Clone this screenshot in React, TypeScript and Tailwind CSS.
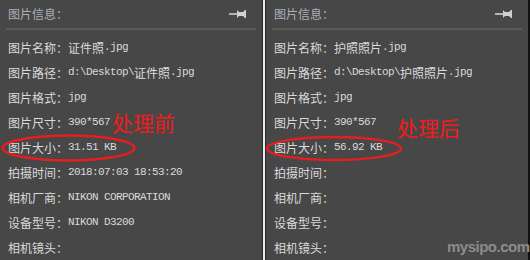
import React from 'react'

const cjk = '"Noto Sans CJK SC", "Liberation Sans", sans-serif'
const mono = '"Liberation Mono", "Noto Sans CJK SC", monospace'

interface Row {
  label: string
  value?: string
}

function PinIcon(): React.JSX.Element {
  return (
    <svg width="18" height="10" viewBox="0 0 18 10" className="text-[#d0d0d0]">
      <path d="M0 5 H8" stroke="currentColor" strokeWidth="1.6" />
      <path d="M8 1 L10 3 H14 L16 1 H17 V9 H16 L14 7 H10 L8 9 Z" fill="currentColor" />
    </svg>
  )
}

function Value({ text }: { text: string }): React.JSX.Element {
  // split ascii runs (monospace) from CJK runs
  const parts = text.match(/[\x00-\x7f]+|[^\x00-\x7f]+/g) ?? []
  return (
    <>
      {parts.map((p, i) =>
        /^[\x00-\x7f]+$/.test(p) ? (
          <span key={i} className="text-[11px] tracking-[-0.6px] whitespace-pre" style={{ fontFamily: mono }}>
            {p}
          </span>
        ) : (
          <span key={i} className="text-[12px]" style={{ fontFamily: cjk }}>
            {p}
          </span>
        )
      )}
    </>
  )
}

function Panel({ rows }: { rows: Row[] }): React.JSX.Element {
  return (
    <div className="w-[262px] h-full bg-[#474747] px-[6px] flex flex-col">
      <div className="h-[32px] flex items-center justify-between border-b-2 border-[#5a5a5a] pl-[2px] pr-[9px]">
        <span className="text-[12px] text-[#a9b0ba]" style={{ fontFamily: cjk }}>
          图片信息：
        </span>
        <PinIcon />
      </div>
      <div className="pt-[5px] flex flex-col">
        {rows.map((r) => (
          <div key={r.label} className="h-[25px] flex items-center pl-[2px] text-[#dadada]">
            <span className="text-[12px]" style={{ fontFamily: cjk }}>
              {r.label}：
            </span>
            {r.value && <Value text={r.value} />}
          </div>
        ))}
      </div>
    </div>
  )
}

const before: Row[] = [
  { label: '图片名称', value: '证件照.jpg' },
  { label: '图片路径', value: 'd:\\Desktop\\证件照.jpg' },
  { label: '图片格式', value: 'jpg' },
  { label: '图片尺寸', value: '390*567' },
  { label: '图片大小', value: '31.51 KB' },
  { label: '拍摄时间', value: '2018:07:03 18:53:20' },
  { label: '相机厂商', value: 'NIKON CORPORATION' },
  { label: '设备型号', value: 'NIKON D3200' },
  { label: '相机镜头' },
]

const after: Row[] = [
  { label: '图片名称', value: '护照照片.jpg' },
  { label: '图片路径', value: 'd:\\Desktop\\护照照片.jpg' },
  { label: '图片格式', value: 'jpg' },
  { label: '图片尺寸', value: '390*567' },
  { label: '图片大小', value: '56.92 KB' },
  { label: '拍摄时间' },
  { label: '相机厂商' },
  { label: '设备型号' },
  { label: '相机镜头' },
]

export default function App(): React.JSX.Element {
  return (
    <div className="relative w-[530px] h-[260px] flex bg-[#474747] overflow-hidden">
      <Panel rows={before} />
      <div className="w-px h-full bg-[#2a2a2a]" />
      <div className="w-[2px] h-full bg-[#ececec]" />
      <div className="w-px h-full bg-[#2a2a2a]" />
      <Panel rows={after} />
      <div className="w-[2px] h-full bg-[#111]" />

      {/* red annotations */}
      <span
        className="absolute left-[112px] top-[112px] text-[21px] leading-none text-[#ee1c1c]"
        style={{ fontFamily: cjk }}
      >
        处理前
      </span>
      <span
        className="absolute left-[397px] top-[117px] text-[21px] leading-none text-[#ee1c1c]"
        style={{ fontFamily: cjk }}
      >
        处理后
      </span>
      <svg className="absolute left-0 top-0 pointer-events-none" width="530" height="260">
        <ellipse cx="68.5" cy="148" rx="66" ry="12.5" fill="none" stroke="#e61e1e" strokeWidth="2.5" />
        <ellipse cx="334" cy="148.5" rx="67" ry="11.5" fill="none" stroke="#e61e1e" strokeWidth="2.5" />
      </svg>

      <span
        className="absolute left-[447px] top-[239px] text-[15px] font-bold leading-none text-[#8c8c8c] tracking-[-0.5px]"
        style={{ fontFamily: '"Liberation Sans", sans-serif' }}
      >
        mysipo.com
      </span>
    </div>
  )
}
